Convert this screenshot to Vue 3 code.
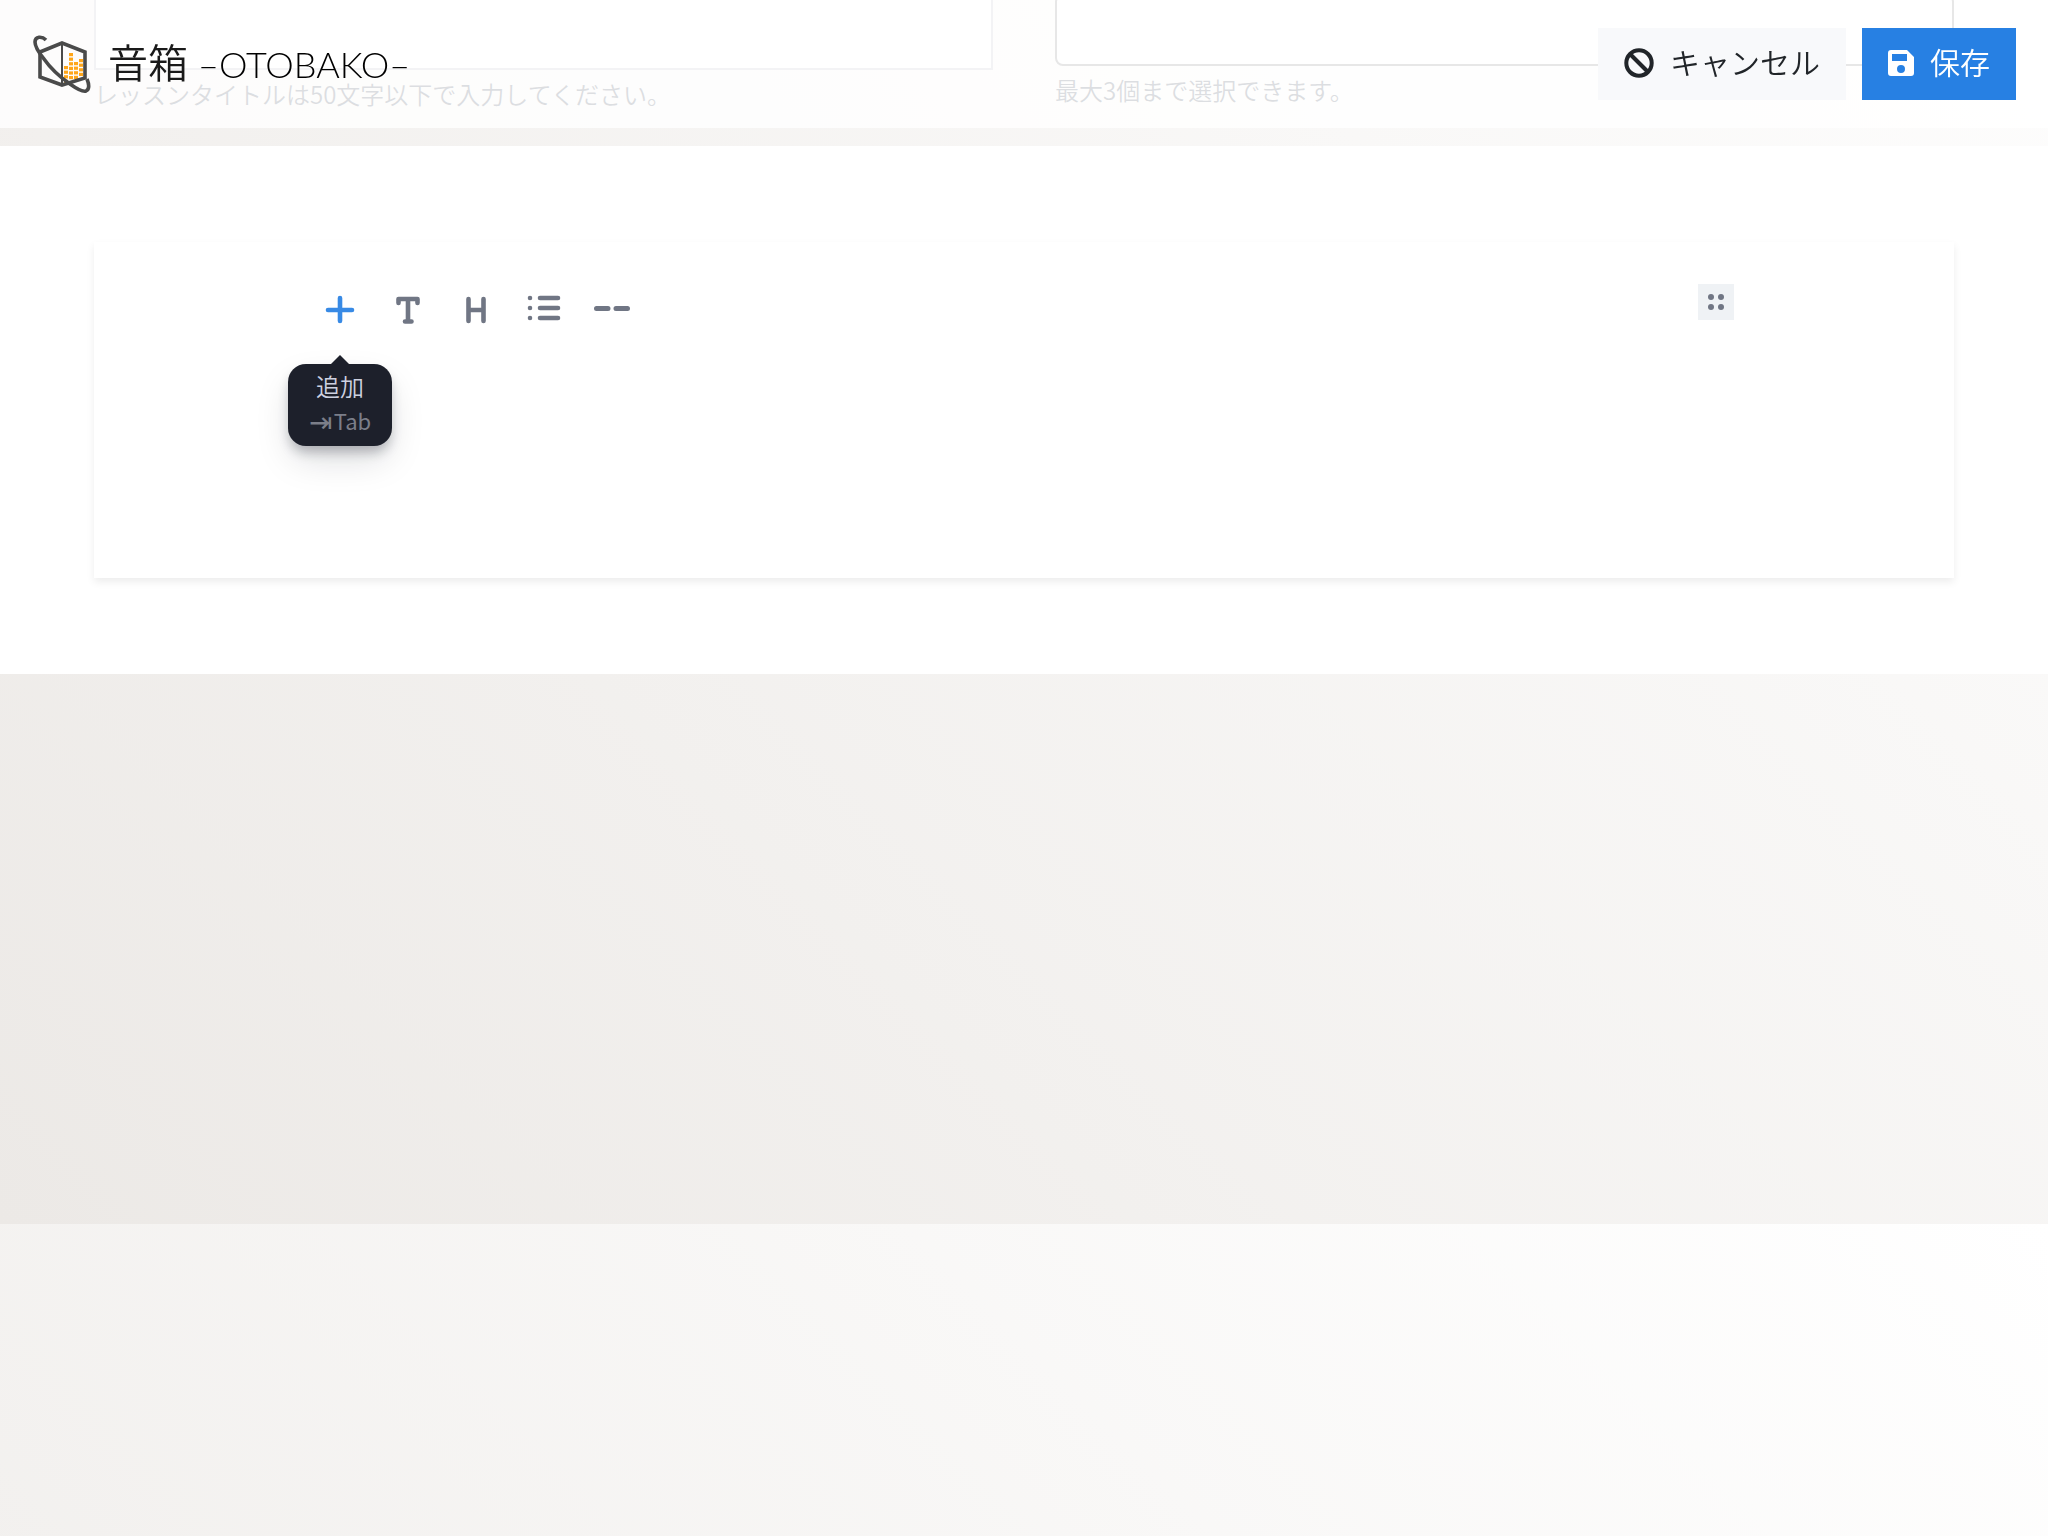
<script setup>
const bars = [
  { x: 32, y: 32, n: 4 },
  { x: 37, y: 19, n: 6 },
  { x: 42, y: 28, n: 4 },
  { x: 47, y: 25, n: 4 },
]
</script>

<template>
  <div class="page">
    <header class="navbar">
      <a class="brand" href="#">
        <svg class="logo" viewBox="0 0 60 60" aria-hidden="true">
          <g fill="#ffa61a">
            <template v-for="b in bars" :key="b.x">
              <rect v-for="i in b.n" :key="i" :x="b.x" :y="b.y + (i - 1) * 4.6" width="4" height="3.2" />
            </template>
          </g>
          <g fill="none" stroke="#4a4a4a" stroke-width="3.6">
            <path d="M8 18 30 9 53 18V44L30 51 8 43Z" />
            <path d="M30 9V51" stroke-width="2" />
            <path d="M14 6C10 2 3 2 3 8C3 14 8 20 12 25C19 35 28 43 38 50C45 55 51 58 54 57C58 55 57 50 55 45" />
          </g>
        </svg>
        <span class="brand-jp">音箱</span>
        <span class="brand-en">–OTOBAKO–</span>
      </a>
      <div class="actions">
        <button type="button" class="btn btn-light">
          <svg width="30" height="30" viewBox="0 0 30 30" fill="none" stroke="currentColor" stroke-width="4" aria-hidden="true">
            <circle cx="15" cy="15" r="12.7" /><path d="M6 6 24 24" />
          </svg>
          <span>キャンセル</span>
        </button>
        <button type="button" class="btn btn-primary">
          <svg width="26" height="26" viewBox="0 0 26 26" aria-hidden="true">
            <path fill="currentColor" fill-rule="evenodd" d="M3 0H19L26 7V23A3 3 0 0 1 23 26H3A3 3 0 0 1 0 23V3A3 3 0 0 1 3 0ZM4 4V11H19V4ZM13 15A4 4 0 1 0 13 23A4 4 0 1 0 13 15Z" />
          </svg>
          <span>保存</span>
        </button>
      </div>
    </header>

    <form class="fields" @submit.prevent>
      <div class="field">
        <input class="title-input" type="text" aria-label="レッスンタイトル" aria-describedby="title-help" />
        <small id="title-help">レッスンタイトルは50文字以下で入力してください。</small>
      </div>
      <div class="field">
        <input class="tag-input" type="text" aria-label="タグ" aria-describedby="tag-help" />
        <small id="tag-help">最大3個まで選択できます。</small>
      </div>
    </form>

    <main class="editor-wrap">
      <section class="editor">
        <div class="toolbar">
          <div class="toolbox">
            <button type="button" class="tool active" aria-label="追加">
              <svg width="36" height="36" viewBox="0 0 36 36"><path d="M18 7V30M6 19H30" /></svg>
              <span class="tooltip" role="tooltip">追加<span class="key"><span class="arrow">⇥</span>Tab</span></span>
            </button>
            <button type="button" class="tool" aria-label="テキスト">
              <svg width="36" height="36" viewBox="0 0 36 36"><path d="M8.5 12V8H27.5V12M18 8V30M15 30.5H21.5" /></svg>
            </button>
            <button type="button" class="tool" aria-label="見出し">
              <svg width="36" height="36" viewBox="0 0 36 36"><path d="M10.5 8V30M25.5 8V30M10.5 19H25.5" /></svg>
            </button>
            <button type="button" class="tool" aria-label="リスト">
              <svg width="36" height="36" viewBox="0 0 36 36"><path d="M14 7H32M14 17H32M14 27H32M4 7H4.01M4 17H4.01M4 27H4.01" /></svg>
            </button>
            <button type="button" class="tool" aria-label="区切り">
              <svg width="36" height="36" viewBox="0 0 36 36"><path d="M2.5 17.5H14M22 17.5H33.5" stroke-width="5" /></svg>
            </button>
          </div>
          <button type="button" class="settings" aria-label="設定">
            <svg width="16" height="16" viewBox="0 0 16 16" fill="#707684">
              <circle cx="3" cy="3" r="3" /><circle cx="13" cy="3" r="3" /><circle cx="3" cy="13" r="3" /><circle cx="13" cy="13" r="3" />
            </svg>
          </button>
        </div>
      </section>
    </main>
  </div>
</template>

<style>
body {
  margin: 0;
}
</style>

<style scoped>
.page {
  box-sizing: border-box;
  min-height: 100vh;
  overflow: hidden;
  background: linear-gradient(45deg, #ece9e6, #fff) 0 -312px / 100% 100vh;
  color: #212529;
  font-family: "Noto Sans CJK JP", sans-serif;
  font-weight: 350;
}
.navbar {
  box-sizing: border-box;
  position: fixed;
  z-index: 10;
  top: 0;
  left: 0;
  right: 0;
  height: 128px;
  padding: 0 32px;
  display: flex;
  align-items: center;
  justify-content: space-between;
  background: rgba(255, 255, 255, 0.8);
}
.brand {
  display: flex;
  align-items: center;
  color: #1a1a1a;
  text-decoration: none;
  line-height: 56px;
}
.logo {
  width: 60px;
  height: 60px;
  margin-right: 16px;
}
.brand-jp {
  font-size: 40px;
  margin-right: 10px;
  padding-bottom: 6px;
}
.brand-en {
  font-family: Lato, sans-serif;
  font-size: 36px;
  font-weight: 300;
  color: #000;
}
.actions {
  display: flex;
  gap: 16px;
}
.btn {
  display: flex;
  align-items: center;
  gap: 16px;
  height: 72px;
  padding: 0 26px;
  border: 0;
  font: inherit;
  font-size: 30px;
}
.btn span {
  padding-bottom: 6px;
}
.btn svg {
  margin-bottom: 2px;
}
.btn-light {
  background: #f8f9fb;
  color: #212529;
}
.btn-primary {
  background: #2780e3;
  color: #fff;
}
.fields {
  display: grid;
  grid-template-columns: 1fr 1fr;
  gap: 62px;
  height: 152px;
  margin-top: -6px;
  padding: 0 94px;
}
.field {
  display: flex;
  flex-direction: column;
  gap: 6px;
}
.field input {
  box-sizing: border-box;
  width: 100%;
  height: 72px;
  border: 2px solid #858585;
  background: #fff;
}
.field .title-input {
  height: 76px;
  border-color: #c0c4cc;
}
.field .tag-input {
  border-radius: 8px;
}
.field small {
  color: #535b6c;
  font-size: 24px;
  line-height: 36px;
}
.editor-wrap {
  padding: 96px 94px;
  background: #fff;
}
.editor {
  box-sizing: border-box;
  min-height: 336px;
  padding: 42px 0;
  background: #fff;
  box-shadow: 0 4px 8px rgba(0, 0, 0, 0.075);
}
.toolbar {
  box-sizing: border-box;
  max-width: 1436px;
  margin: 0 auto;
  padding-right: 8px;
  display: flex;
  justify-content: space-between;
  align-items: flex-start;
}
.toolbox {
  display: flex;
}
.tool {
  position: relative;
  display: flex;
  align-items: center;
  justify-content: center;
  width: 68px;
  height: 50px;
  padding: 0;
  border: 0;
  background: none;
  color: #707684;
}
.tool.active {
  color: #388ae5;
}
.tool svg {
  fill: none;
  stroke: currentColor;
  stroke-width: 4.6;
  stroke-linecap: round;
  stroke-linejoin: round;
}
.tooltip {
  position: absolute;
  top: 80px;
  left: 50%;
  transform: translateX(-50%);
  box-sizing: border-box;
  width: 104px;
  padding: 4px 0 8px;
  border-radius: 18px;
  background: #1d202b;
  color: #cdd1e0;
  font: 350 24px/35px "Noto Sans CJK JP", sans-serif;
  text-align: center;
  box-shadow: 0 8px 12px -2px rgba(13, 20, 33, 0.27), 0 16px 36px -4px rgba(13, 20, 33, 0.15);
}
.tooltip::before {
  content: "";
  position: absolute;
  bottom: 100%;
  left: 50%;
  transform: translateX(-50%);
  border: 9px solid transparent;
  border-top: 0;
  border-bottom-color: #1d202b;
}
.key {
  display: flex;
  align-items: center;
  justify-content: center;
  gap: 2px;
  color: #7b7e89;
  font-size: 22px;
  font-weight: 400;
}
.arrow {
  font-size: 28px;
}
.settings {
  display: flex;
  align-items: center;
  justify-content: center;
  width: 36px;
  height: 36px;
  padding: 0;
  border: 0;
  background: #eff2f5;
}
</style>
